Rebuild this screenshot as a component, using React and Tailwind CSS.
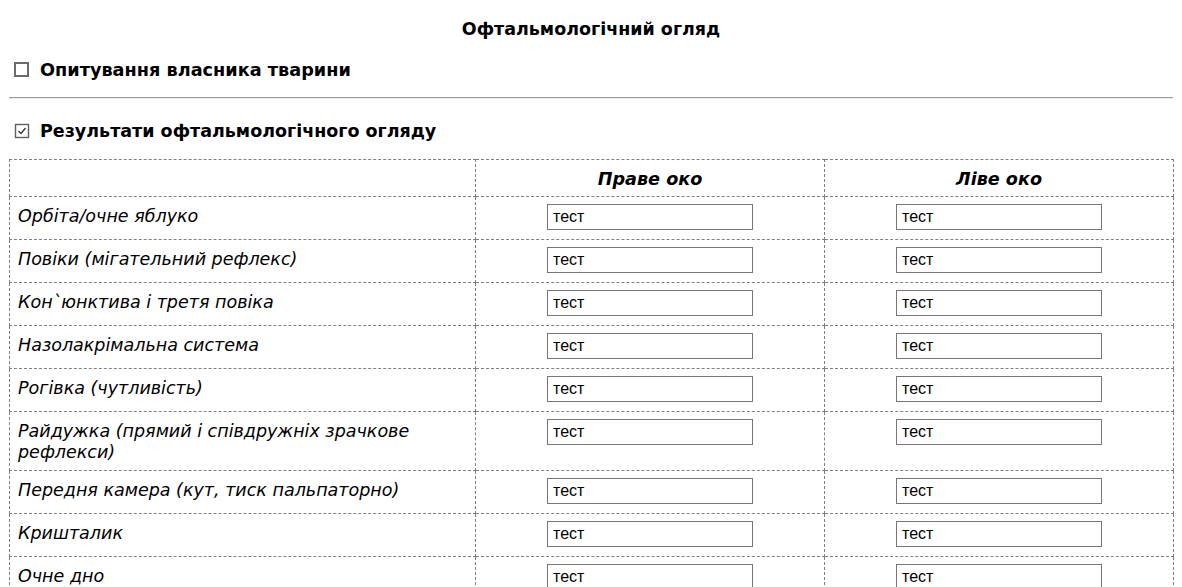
import React from 'react';

const rows = [
  'Орбіта/очне яблуко',
  'Повіки (мігательний рефлекс)',
  'Кон`юнктива і третя повіка',
  'Назолакрімальна система',
  'Рогівка (чутливість)',
  'Райдужка (прямий і співдружніх зрачкове рефлекси)',
  'Передня камера (кут, тиск пальпаторно)',
  'Кришталик',
  'Очне дно',
];

const font = { fontFamily: '"DejaVu Sans", Verdana, sans-serif' };

const Box = ({ checked }) => (
  <svg width="16" height="16" viewBox="0 0 16 16" className="shrink-0">
    {checked ? (
      <>
        <rect x="1.5" y="1.5" width="13" height="13" fill="white" stroke="#5f5f5f" strokeWidth="1.4" />
        <path d="M4.5 8 L7 10.5 L11.5 5" fill="none" stroke="#333" strokeWidth="1.3" />
      </>
    ) : (
      <rect x="1" y="1" width="13" height="13" fill="white" stroke="#6b6b6b" strokeWidth="2" />
    )}
  </svg>
);

const Field = () => (
  <input
    defaultValue="тест"
    className="w-[206px] h-[26px] border border-[#767676] px-[5px] text-[16px] text-black bg-white outline-none align-top"
    style={{ fontFamily: '"Liberation Sans", Arial, sans-serif' }}
  />
);

export default function App() {
  return (
    <div className="bg-white text-black min-h-screen" style={font}>
      <h1 className="text-center font-bold text-[17.5px] leading-[20px] pt-[19px]">Офтальмологічний огляд</h1>

      <div className="flex items-center gap-[10px] pl-[14px] mt-[21px] h-[20px]">
        <Box />
        <span className="font-bold text-[17.7px]">Опитування власника тварини</span>
      </div>

      <div className="mx-[9px] mt-[17px] border-t border-t-[#9a9a9a] border-b border-b-[#eeeeee]" />

      <div className="flex items-center gap-[10px] pl-[14px] mt-[22px] h-[20px]">
        <Box checked />
        <span className="font-bold text-[17.5px]">Результати офтальмологічного огляду</span>
      </div>

      <table className="mx-[9px] mt-[18px] w-[1164px] border-collapse table-fixed">
        <colgroup>
          <col className="w-[466px]" />
          <col className="w-[349px]" />
          <col className="w-[349px]" />
        </colgroup>
        <thead>
          <tr>
            <th className="border border-dashed border-[#808080] pt-[9px] pb-[6px]"></th>
            <th className="border border-dashed border-[#808080] pt-[9px] pb-[6px] text-[17.6px] leading-[21px] italic font-bold">Праве око</th>
            <th className="border border-dashed border-[#808080] pt-[9px] pb-[6px] text-[17.6px] leading-[21px] italic font-bold">Ліве око</th>
          </tr>
        </thead>
        <tbody>
          {rows.map((label) => (
            <tr key={label}>
              <td className="border border-dashed border-[#808080] align-top pl-[8px] pr-[8px] pt-[9px] pb-[7px] italic text-[17.5px] leading-[21px]">
                {label}
              </td>
              <td className="border border-dashed border-[#808080] align-top text-center pt-[7px] pb-[9px] leading-[26px]">
                <Field />
              </td>
              <td className="border border-dashed border-[#808080] align-top text-center pt-[7px] pb-[9px] leading-[26px]">
                <Field />
              </td>
            </tr>
          ))}
        </tbody>
      </table>
    </div>
  );
}
